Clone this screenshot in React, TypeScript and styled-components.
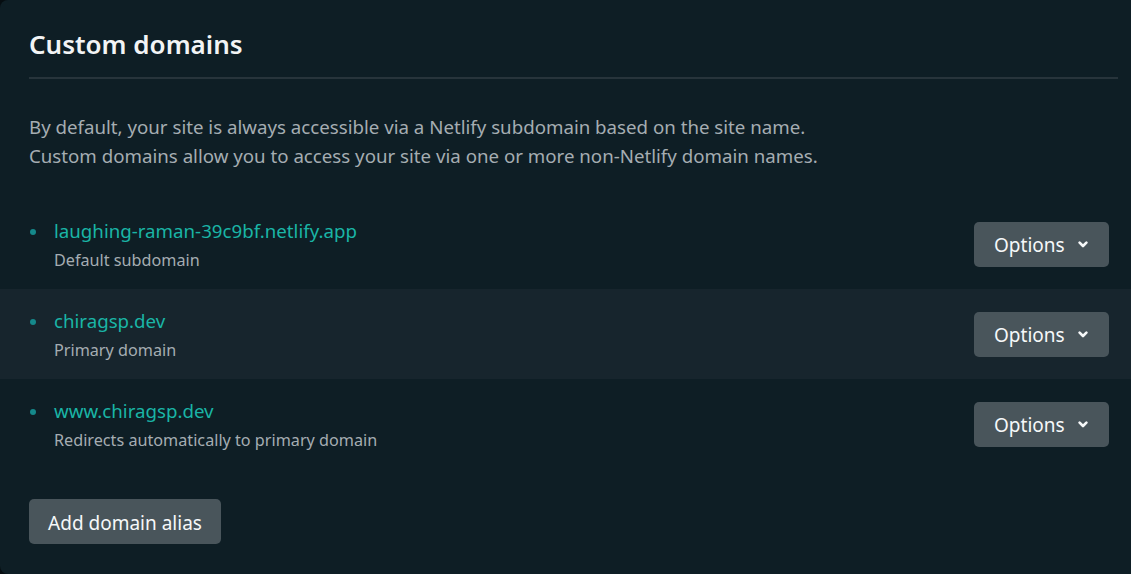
import React from "react";
import styled, { createGlobalStyle } from "styled-components";

const Global = createGlobalStyle`
  html, body { margin: 0; padding: 0; background: #060d11; }
  body { font-family: "Noto Sans", "Open Sans", sans-serif; -webkit-font-smoothing: antialiased; }
  * { box-sizing: border-box; }
`;

const Card = styled.section`
  width: 1140px;
  height: 574px;
  background: #0e1e25;
  border-radius: 8px 0 0 8px;
  padding: 27px 0 0 0;
`;

const Header = styled.div`
  margin: 0 22px 0 29px;
  padding-bottom: 15px;
  border-bottom: 2px solid #27343b;
`;

const Title = styled.h2`
  margin: 0;
  font-size: 26px;
  font-weight: 600;
  line-height: 35px;
  color: #f2f4f5;
`;

const Intro = styled.p`
  margin: 33px 0 0 29px;
  font-size: 18.7px;
  line-height: 29px;
  color: #a5adb2;
`;

const List = styled.ul`
  list-style: none;
  margin: 29px 0 0 0;
  padding: 0;
  width: 1131px;
`;

const Row = styled.li<{ $shaded?: boolean }>`
  height: 90px;
  display: flex;
  align-items: center;
  justify-content: space-between;
  padding: 0 22px 0 29px;
  background: ${(p) => (p.$shaded ? "#17252d" : "transparent")};
`;

const Info = styled.div`
  display: flex;
  align-items: flex-start;
  margin-top: 3px;
`;

const Bullet = styled.span`
  width: 6px;
  height: 6px;
  border-radius: 50%;
  background: #15898b;
  margin: 12px 18px 0 1px;
  flex: none;
`;

const Texts = styled.div`
  display: flex;
  flex-direction: column;
`;

const Domain = styled.a`
  font-size: 18.7px;
  line-height: 28px;
  color: #1ab5a6;
  text-decoration: none;
`;

const Desc = styled.span`
  font-size: 16.2px;
  line-height: 30px;
  color: #a5adb2;
`;

const Button = styled.button`
  height: 45px;
  border: none;
  border-radius: 5px;
  background: #49555b;
  color: #f6f8f9;
  font-family: inherit;
  font-size: 19px;
  display: inline-flex;
  align-items: center;
  padding-top: 3px;
  cursor: pointer;
`;

const OptionsButton = styled(Button)`
  width: 135px;
  padding-left: 20px;
  padding-right: 0;
  gap: 13px;
`;

const AddButton = styled(Button)`
  margin: 30px 0 0 29px;
  width: 192px;
  justify-content: center;
`;

const Chevron = () => (
  <svg width="10" height="8" viewBox="0 0 10 8" aria-hidden="true">
    <path d="M1.6 1.6 L5 5 L8.4 1.6" fill="none" stroke="#f6f8f9" strokeWidth="2.6" strokeLinecap="round" strokeLinejoin="round" />
  </svg>
);

const domains = [
  { name: "laughing-raman-39c9bf.netlify.app", desc: "Default subdomain" },
  { name: "chiragsp.dev", desc: "Primary domain" },
  { name: "www.chiragsp.dev", desc: "Redirects automatically to primary domain" },
];

export default function App() {
  return (
    <>
      <Global />
      <Card>
        <Header>
          <Title>Custom domains</Title>
        </Header>
        <Intro>
          By default, your site is always accessible via a Netlify subdomain based on the site name.
          <br />
          Custom domains allow you to access your site via one or more non-Netlify domain names.
        </Intro>
        <List>
          {domains.map((d, i) => (
            <Row key={d.name} $shaded={i === 1}>
              <Info>
                <Bullet />
                <Texts>
                  <Domain href="#">{d.name}</Domain>
                  <Desc>{d.desc}</Desc>
                </Texts>
              </Info>
              <OptionsButton>
                Options <Chevron />
              </OptionsButton>
            </Row>
          ))}
        </List>
        <AddButton>Add domain alias</AddButton>
      </Card>
    </>
  );
}
